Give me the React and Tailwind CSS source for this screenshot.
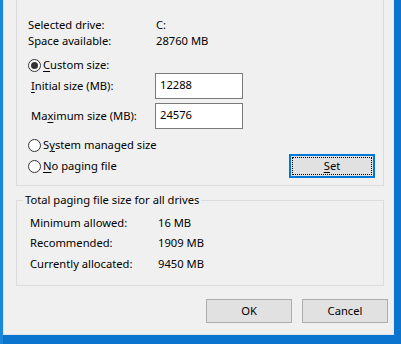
import React from "react";

// little radio circle like the Win10 classic dialogs
const Radio = ({ checked }) => (
    <span className="w-[13px] h-[13px] rounded-full border border-[#333333] bg-white flex items-center justify-center shrink-0">
        {checked && <span className="w-[7px] h-[7px] rounded-full bg-[#333333]"></span>}
    </span>
);

const U = ({ children }) => <span className="underline underline-offset-2 decoration-1">{children}</span>;

const InfoRow = ({ label, value, h = "h-[16px]" }) => (
    <div className={`flex items-center ${h}`}>
        <div className="w-[128px]">{label}</div>
        <div>{value}</div>
    </div>
);

const SizeInput = ({ label, value }) => (
    <div className="flex items-center h-[26px]">
        <div className="w-[127px] pl-[3px]">{label}</div>
        <div className="w-[88px] h-[26px] border border-[#7a7a7a] bg-white flex items-center pl-[4px] pb-[2px]">{value}</div>
    </div>
);

const Button = ({ children }) => (
    <div className="w-[86px] h-[24px] bg-[#e1e1e1] border border-[#adadad] flex items-center justify-center">{children}</div>
);

export default function App() {
    return (
        <div
            className="w-[401px] h-[344px] bg-[#0b74cf] flex items-start text-[11.2px] leading-[16px] text-black"
            style={{ fontFamily: '"Noto Sans", "Open Sans", sans-serif' }}
        >
            <div className="w-[3px] h-full bg-[#1a86dc]"></div>
            <div className="w-[391px] h-[335px] bg-[#f0f0f0] border-l border-r border-b border-[#dfe6ee] flex flex-col pl-[12px]">
                {/* drive group, top edge is cut off */}
                <div className="w-[368px] h-[186px] border-x border-b border-[#dcdcdc] pl-[11px] pt-[17px] flex flex-col">
                    <InfoRow label="Selected drive:" value="C:" />
                    <InfoRow label="Space available:" value="28760 MB" />

                    <div className="flex items-center h-[16px] mt-[8px]">
                        <Radio checked />
                        <span className="ml-[2px]"><U>C</U>ustom size:</span>
                    </div>
                    <SizeInput label={<><U>I</U>nitial size (MB):</>} value="12288" />
                    <div className="mt-[4px]">
                        <SizeInput label={<>Ma<U>x</U>imum size (MB):</>} value="24576" />
                    </div>

                    <div className="flex items-center h-[16px] mt-[8px]">
                        <Radio />
                        <span className="ml-[2px]">S<U>y</U>stem managed size</span>
                    </div>
                    <div className="flex items-center justify-between h-[24px] mt-[1px] pr-[8px]">
                        <div className="flex items-center">
                            <Radio />
                            <span className="ml-[2px]"><U>N</U>o paging file</span>
                        </div>
                        <div className="w-[86px] h-[24px] bg-[#e1e1e1] border-2 border-[#0078d7] p-[1px]">
                            <div className="w-full h-full border border-dotted border-black flex items-center justify-center">
                                <span><U>S</U>et</span>
                            </div>
                        </div>
                    </div>
                </div>

                {/* totals */}
                <fieldset className="w-[368px] h-[94px] mt-[6px] border border-[#dcdcdc]">
                    <legend className="ml-[6px] px-[2px]">Total paging file size for all drives</legend>
                    <div className="mt-[5px] pl-[13px] flex flex-col">
                        <InfoRow label="Minimum allowed:" value="16 MB" h="h-[20px]" />
                        <InfoRow label="Recommended:" value="1909 MB" h="h-[20px]" />
                        <InfoRow label="Currently allocated:" value="9450 MB" h="h-[21px]" />
                    </div>
                </fieldset>

                <div className="flex justify-end gap-[10px] pr-[5px] mt-[13px]">
                    <Button>OK</Button>
                    <Button>Cancel</Button>
                </div>
            </div>
        </div>
    );
}
